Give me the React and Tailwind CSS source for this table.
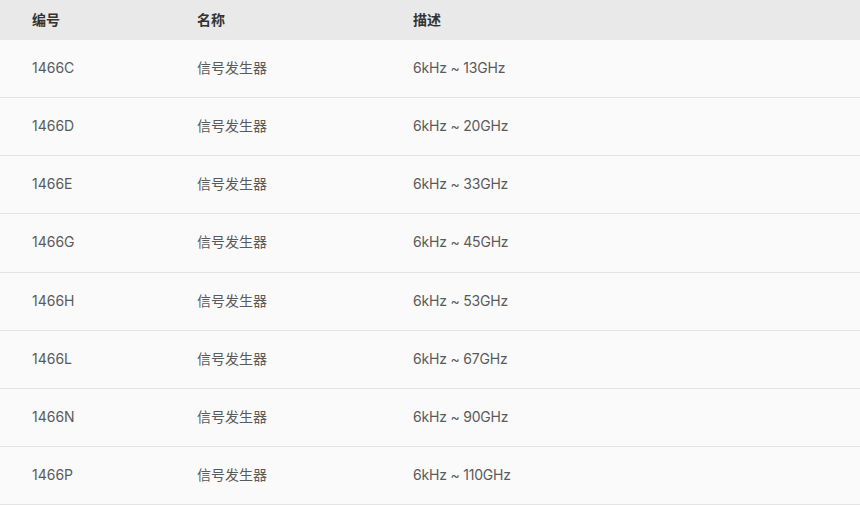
import React from "react";

const rows = [
  ["1466C", "信号发生器", "6kHz ~ 13GHz"],
  ["1466D", "信号发生器", "6kHz ~ 20GHz"],
  ["1466E", "信号发生器", "6kHz ~ 33GHz"],
  ["1466G", "信号发生器", "6kHz ~ 45GHz"],
  ["1466H", "信号发生器", "6kHz ~ 53GHz"],
  ["1466L", "信号发生器", "6kHz ~ 67GHz"],
  ["1466N", "信号发生器", "6kHz ~ 90GHz"],
  ["1466P", "信号发生器", "6kHz ~ 110GHz"],
];

const App = () => {
  return (
    <div
      className="w-[860px] bg-white text-[14px]"
      style={{ fontFamily: 'Inter, "Noto Sans CJK SC", sans-serif' }}
    >
      <div className="grid grid-cols-[197px_216px_1fr] h-[40px] items-center bg-[#e9e9e9] font-bold text-[#333] pb-[1px]">
        <div className="pl-8">编号</div>
        <div>名称</div>
        <div>描述</div>
      </div>
      {rows.map((r) => (
        <div
          key={r[0]}
          className="grid grid-cols-[197px_216px_1fr] h-[58.14px] items-center bg-[#fafafa] border-b border-[#e3e3e3] text-[#5a5a5a] pb-[2px]"
        >
          <div className="pl-8">{r[0]}</div>
          <div>{r[1]}</div>
          <div className="tracking-[-0.2px]">{r[2]}</div>
        </div>
      ))}
    </div>
  );
};

export default App;
